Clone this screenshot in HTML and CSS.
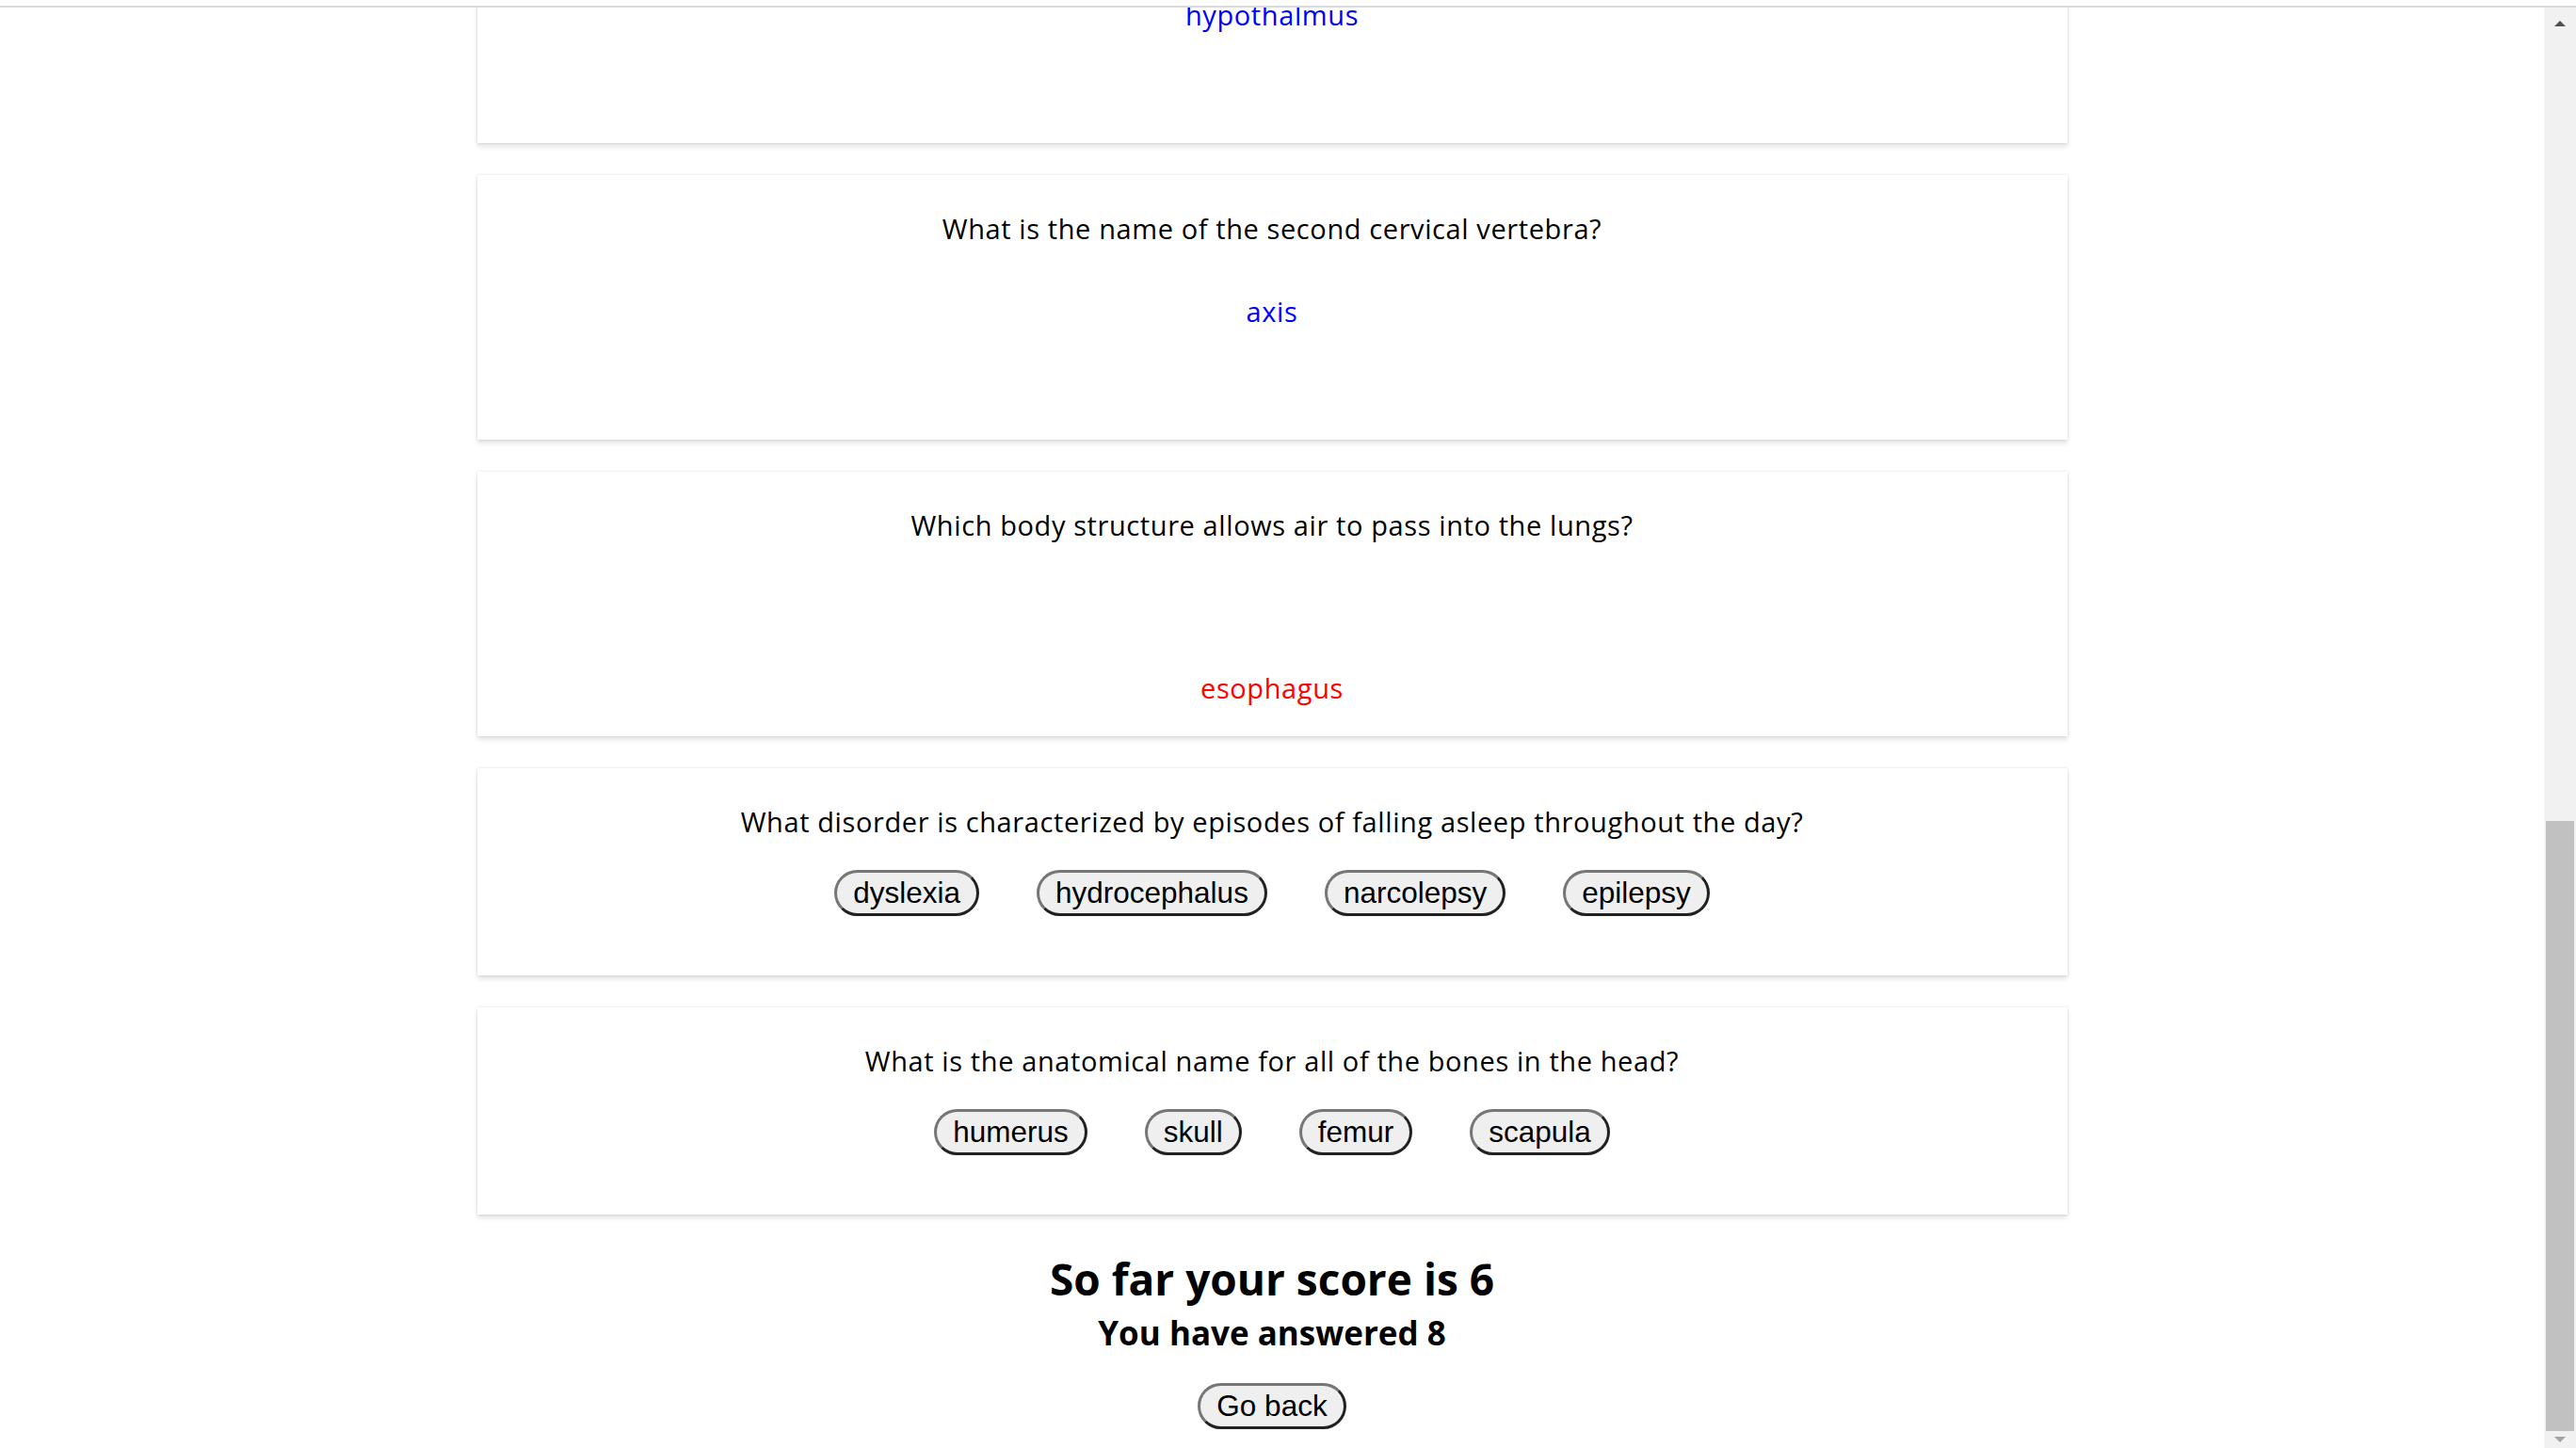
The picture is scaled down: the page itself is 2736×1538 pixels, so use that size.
FILE: index.html
```html
<!DOCTYPE html>
<html lang="en">
<head>
<meta charset="utf-8">
<title>Anatomy Quiz</title>
<link rel="stylesheet" href="styles.css">
</head>
<body>
<div class="topbar"></div>
<div class="scrollbar">
  <div class="arrow up"></div>
  <div class="track"><div class="thumb"></div></div>
  <div class="arrow down"></div>
</div>
<main class="page">
  <div class="quiz">
    <section class="card answered">
      <p class="question">Which part of the brain regulates body temperature?</p>
      <p class="answer correct">hypothalmus</p>
    </section>
    <section class="card answered">
      <p class="question">What is the name of the second cervical vertebra?</p>
      <p class="answer correct">axis</p>
    </section>
    <section class="card answered">
      <p class="question">Which body structure allows air to pass into the lungs?</p>
      <p class="answer wrong">esophagus</p>
    </section>
    <section class="card">
      <p class="question">What disorder is characterized by episodes of falling asleep throughout the day?</p>
      <div class="options">
        <button class="btn">dyslexia</button>
        <button class="btn">hydrocephalus</button>
        <button class="btn">narcolepsy</button>
        <button class="btn">epilepsy</button>
      </div>
    </section>
    <section class="card">
      <p class="question">What is the anatomical name for all of the bones in the head?</p>
      <div class="options">
        <button class="btn">humerus</button>
        <button class="btn">skull</button>
        <button class="btn">femur</button>
        <button class="btn">scapula</button>
      </div>
    </section>
  </div>
  <div class="score">
    <h2 class="score-title">So far your score is 6</h2>
    <h3 class="score-sub">You have answered 8</h3>
    <button class="btn">Go back</button>
  </div>
</main>
</body>
</html>
```
FILE: styles.css
```css
html, body {
  margin: 0;
  padding: 0;
  height: 1538px;
  overflow: hidden;
  background: #fff;
}
body {
  font-family: "Open Sans", "Noto Sans", sans-serif;
  color: #000;
}
.topbar {
  position: fixed;
  top: 0;
  left: 0;
  right: 0;
  height: 6px;
  background: #fff;
  border-bottom: 2px solid #dadbe1;
  z-index: 10;
}
.scrollbar {
  position: fixed;
  top: 8px;
  right: 0;
  bottom: 0;
  width: 34px;
  background: #f1f1f1;
  display: flex;
  flex-direction: column;
  align-items: center;
  z-index: 5;
}
.arrow {
  width: 0;
  height: 0;
  border-left: 6px solid transparent;
  border-right: 6px solid transparent;
}
.arrow.up {
  margin-top: 14px;
  border-bottom: 6px solid #505050;
}
.arrow.down {
  margin-bottom: 6px;
  border-top: 6px solid #a3a3a3;
}
.track {
  flex: 1;
  width: 100%;
  display: flex;
  flex-direction: column;
  justify-content: flex-end;
  align-items: center;
  padding-bottom: 6px;
}
.thumb {
  width: 30px;
  height: 648px;
  background: #c1c1c1;
}
.page {
  margin-right: 34px;
}
.quiz {
  width: 1689px;
  margin: -129px auto 0;
  display: flex;
  flex-direction: column;
  gap: 34px;
}
.card {
  background: #fff;
  box-sizing: border-box;
  padding: 38px 20px 0;
  text-align: center;
  box-shadow: 0 0 3px rgba(0, 0, 0, 0.13), 0 4px 5px rgba(0, 0, 0, 0.1);
}
.card.answered {
  height: 281px;
}
.question, .answer {
  margin: 0;
  font-size: 29px;
  line-height: 37px;
  letter-spacing: 0.6px;
}
.answer.correct {
  color: #0000ff;
  margin-top: 51px;
}
.answer.wrong {
  color: #ff0000;
  margin-top: 136px;
}
.options {
  display: flex;
  justify-content: center;
  gap: 61px;
  margin-top: 33px;
  padding-bottom: 63px;
}
.btn {
  font-family: "Liberation Sans", Arial, sans-serif;
  font-size: 31.5px;
  line-height: 35px;
  padding: 4px 17px;
  border: 3px outset #767676;
  border-radius: 999px;
  background: #efefef;
  color: #000;
}
.score {
  text-align: center;
}
.score-title {
  margin: 39px 0 0;
  font-size: 46px;
  line-height: 58px;
  font-weight: 700;
}
.score-sub {
  margin: 8px 0 0;
  font-size: 35px;
  line-height: 42px;
  font-weight: 700;
}
.score .btn {
  margin-top: 32px;
}
```
